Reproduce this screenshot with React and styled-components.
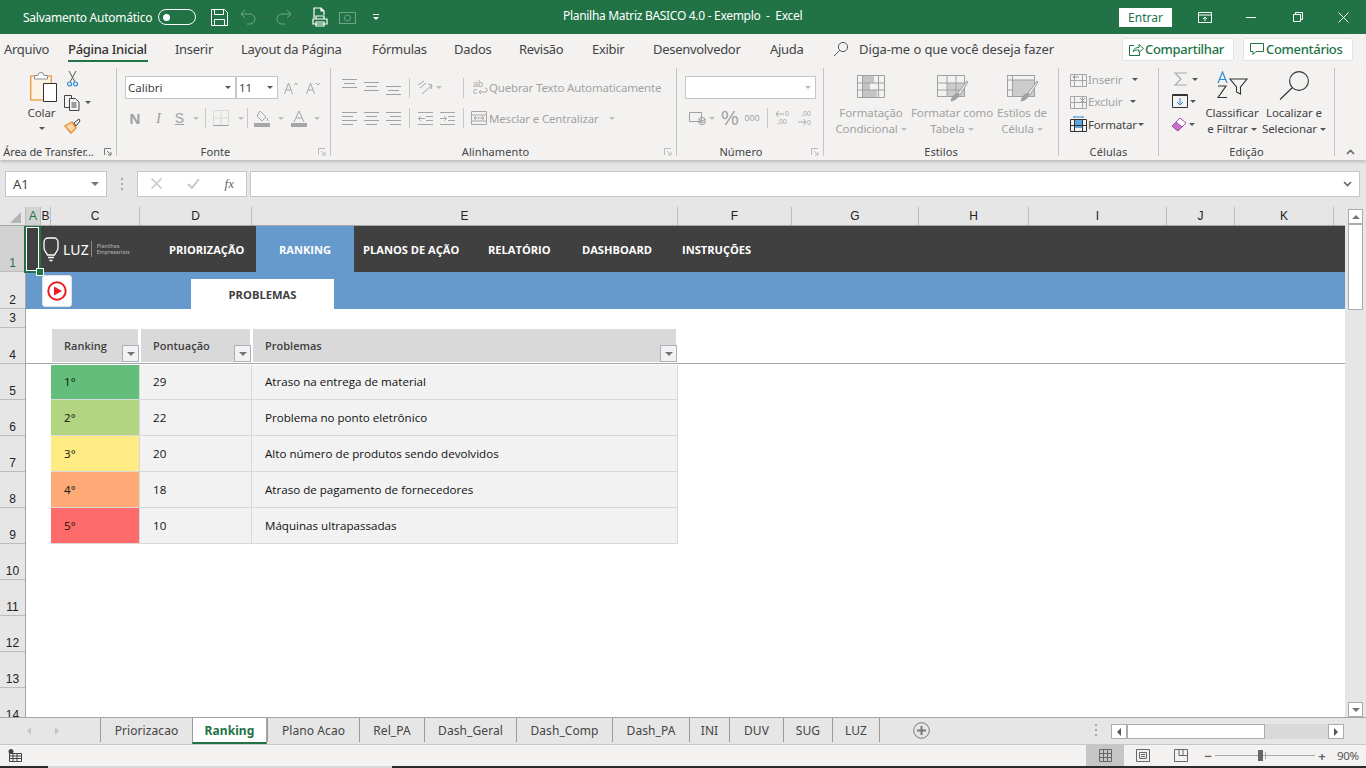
import React from "react";
import styled, {createGlobalStyle} from "styled-components";

const UI = `"Noto Sans", "Open Sans", sans-serif`;
const CELL = `"Open Sans", "Noto Sans", sans-serif`;
const GREEN = "#217346";
const DIM = "#a6a6a6";
const DARK = "#444";

const Global = createGlobalStyle`
  html, body { margin: 0; padding: 0; background: #fff; overflow: hidden; }
  * { box-sizing: border-box; }
  svg { display: block; flex: none; }
`;

const Window = styled.div`
  width: 1366px;
  height: 768px;
  display: flex;
  flex-direction: column;
  overflow: hidden;
  font-family: ${UI};
  font-size: 12px;
  color: ${DARK};
  background: #e6e6e6;
`;

/* barra de titulo */
const TitleBar = styled.div`
  height: 34px;
  flex: none;
  background: ${GREEN};
  color: #fff;
  display: flex;
  align-items: center;
  position: relative;
  padding-left: 23px;
`;
const AutoSave = styled.span`
  width: 135px;
  font-size: 12px;
  letter-spacing: -0.25px;
`;
const Toggle = styled.span`
  width: 38px;
  height: 16px;
  border: 1px solid #fff;
  border-radius: 8px;
  display: flex;
  align-items: center;
  padding-left: 4px;
  margin-right: 15px;
  &::before {
    content: "";
    width: 7px;
    height: 7px;
    border-radius: 50%;
    background: #fff;
  }
`;
const QuickSlot = styled.div`
  width: ${p => p.$w}px;
  height: 20px;
  flex: none;
  display: flex;
  align-items: center;
  justify-content: center;
  opacity: ${p => (p.$dim ? 0.35 : 1)};
`;
const DocTitle = styled.div`
  position: absolute;
  left: 563px;
  top: 7px;
  font-size: 12px;
  letter-spacing: -0.3px;
  white-space: pre;
`;
const WindowControls = styled.div`
  margin-left: auto;
  display: flex;
  align-items: center;
`;
const SignIn = styled.div`
  width: 53px;
  height: 19px;
  background: #fff;
  color: ${GREEN};
  font-size: 12px;
  line-height: 19px;
  text-align: center;
  margin-right: 11px;
`;
const ControlButton = styled.div`
  width: ${p => p.$w || 46}px;
  display: flex;
  justify-content: center;
`;

/* abas do ribbon */
const MenuBar = styled.div`
  height: 32px;
  flex: none;
  background: #f3f2f1;
  display: flex;
  align-items: center;
  padding-left: 4px;
`;
const MenuItem = styled.div`
  width: ${p => p.$w}px;
  flex: none;
  height: 32px;
  line-height: 30px;
  font-size: 13px;
  letter-spacing: -0.3px;
  color: ${p => (p.$active ? "#333" : "#444")};
  font-weight: ${p => (p.$active ? 500 : 400)};
  position: relative;
  white-space: nowrap;
  ${p => p.$active && `
    &::after {
      content: "";
      position: absolute;
      left: 0;
      width: 80px;
      top: 26px;
      height: 2px;
      background: ${GREEN};
    }
  `}
`;
const Hint = styled.div`
  display: flex;
  align-items: center;
  gap: 10px;
  font-size: 13px;
  color: #444;
  letter-spacing: -0.1px;
  margin-top: -2px;
`;
const ShareGroup = styled.div`
  margin-left: auto;
  display: flex;
  gap: 9px;
  padding-right: 13px;
  margin-top: -2px;
`;
const ShareButton = styled.div`
  width: ${p => p.$w}px;
  height: 23px;
  background: #fff;
  border: 1px solid #e4e3e2;
  border-radius: 2px;
  color: ${GREEN};
  font-size: 13px;
  font-weight: 500;
  display: flex;
  align-items: center;
  padding-left: 6px;
  gap: 1px;
  letter-spacing: -0.3px;
`;

/* ribbon */
const Ribbon = styled.div`
  height: 94px;
  flex: none;
  background: #f3f2f1;
  display: flex;
  position: relative;
  padding-top: 2px;
  box-shadow: 0 2px 3px rgba(0, 0, 0, 0.18);
  z-index: 2;
`;
const Group = styled.div`
  width: ${p => p.$w}px;
  flex: none;
  height: 88px;
  border-right: 1px solid #c4c4c4;
  display: flex;
  flex-direction: column;
  position: relative;
`;
const GroupBody = styled.div`
  height: 76px;
  flex: none;
  display: flex;
  padding-left: ${p => p.$pad || 0}px;
`;
const GroupLabel = styled.div`
  text-align: center;
  font-size: 11px;
  line-height: 16px;
  color: #444;
  white-space: nowrap;
  padding-right: ${p => p.$shift || 0}px;
  letter-spacing: ${p => p.$tight ? "-0.1px" : "0.1px"};
`;
const Launcher = styled.div`
  position: absolute;
  right: 4px;
  bottom: 0;
`;
const Stack = styled.div`
  display: flex;
  flex-direction: column;
  width: ${p => (p.$w ? `${p.$w}px` : "auto")};
  flex: none;
  gap: ${p => p.$gap || 0}px;
  padding-top: ${p => p.$top || 0}px;
`;
const ToolRow = styled.div`
  display: flex;
  align-items: center;
  height: ${p => p.$h || 22}px;
  margin-top: ${p => p.$mt || 0}px;
`;
const Tool = styled.div`
  width: ${p => p.$w}px;
  height: 100%;
  flex: none;
  display: flex;
  align-items: center;
  justify-content: center;
  font-family: "Liberation Serif", serif;
`;
const Caret = styled.span`
  display: block;
  width: 0;
  height: 0;
  border-left: 3px solid transparent;
  border-right: 3px solid transparent;
  border-top: 3px solid ${p => (p.$dim ? "#bdbdbd" : "#555")};
`;
const Divider = styled.div`
  width: 1px;
  height: 20px;
  flex: none;
  background: #c8c8c8;
  margin-left: ${p => p.$l || 0}px;
  margin-right: ${p => p.$r || 0}px;
`;
const Combo = styled.div`
  width: ${p => p.$w}px;
  height: 23px;
  flex: none;
  background: #fff;
  border: 1px solid #c6c6c6;
  display: flex;
  align-items: center;
  justify-content: space-between;
  padding: 0 4px 0 2px;
  font-size: 11.5px;
  color: #444;
`;
const LargeTool = styled.div`
  width: ${p => p.$w}px;
  flex: none;
  display: flex;
  flex-direction: column;
  align-items: center;
  padding-top: ${p => p.$top || 7}px;
  color: ${p => (p.$dim ? "#a2a2a2" : "#444")};
`;
const LargeIcon = styled.div`
  height: ${p => p.$h || 27}px;
  flex: none;
  display: flex;
  align-items: flex-start;
  justify-content: center;
  margin-bottom: 3px;
  margin-left: ${p => p.$l || 0}px;
`;
const LargeText = styled.div`
  font-size: 11.5px;
  line-height: 16px;
  flex: none;
  white-space: nowrap;
  display: flex;
  align-items: center;
  gap: 3px;
  letter-spacing: -0.1px;
`;
const SmallLabel = styled.span`
  font-size: 11.5px;
  color: ${p => (p.$dim ? "#a2a2a2" : "#444")};
  white-space: nowrap;
  letter-spacing: -0.17px;
`;
const GlyphN = styled.b`
  color: #a0a0a0;
  font-size: 15px;
  font-family: "Liberation Sans", sans-serif;
`;
const GlyphI = styled.i`
  color: #a0a0a0;
  font-size: 15px;
`;
const GlyphS = styled.u`
  color: #a0a0a0;
  font-size: 14px;
  font-family: "Liberation Sans", sans-serif;
`;
const Percent = styled.span`
  font-family: "Liberation Sans", sans-serif;
  font-size: 20px;
  color: #a0a0a0;
`;
const Thousands = styled.span`
  font-family: "Liberation Sans", sans-serif;
  font-size: 9px;
  color: #a0a0a0;
`;
const Chevron = styled.div`
  position: absolute;
  right: 11px;
  bottom: 5px;
`;

/* barra de formulas */
const FormulaBar = styled.div`
  height: 47px;
  flex: none;
  background: #e6e6e6;
  display: flex;
  align-items: center;
  padding: 0 6px 0 5px;
`;
const FieldBox = styled.div`
  height: 26px;
  width: ${p => (p.$w ? `${p.$w}px` : "auto")};
  flex: ${p => (p.$w ? "none" : 1)};
  background: #fff;
  border: 1px solid #c6c6c6;
  display: flex;
  align-items: center;
  justify-content: space-between;
  padding: 0 ${p => p.$pr || 7}px 0 ${p => p.$pl || 7}px;
  font-size: 13px;
`;
const Grip = styled.div`
  width: 30px;
  flex: none;
  display: flex;
  justify-content: center;
`;
const FxLabel = styled.span`
  font-family: "Liberation Serif", serif;
  font-style: italic;
  font-size: 13px;
  color: #666;
`;
const FieldGap = styled.div`
  width: 3px;
  flex: none;
`;

/* planilha */
const SheetArea = styled.div`
  flex: 1;
  min-height: 0;
  display: flex;
  background: #e6e6e6;
`;
const SheetMain = styled.div`
  width: 1345px;
  flex: none;
  display: flex;
  flex-direction: column;
`;
const ColumnHeads = styled.div`
  height: 19px;
  flex: none;
  display: flex;
  border-bottom: 1px solid #a6a6a6;
`;
const Corner = styled.div`
  width: 26px;
  flex: none;
  display: flex;
  align-items: flex-end;
  justify-content: flex-end;
  padding: 0 4px 2px 0;
  border-right: 1px solid #bdbdbd;
`;
const ColHead = styled.div`
  width: ${p => p.$w}px;
  flex: none;
  text-align: center;
  font-family: "Liberation Sans", sans-serif;
  font-size: 12px;
  line-height: 19px;
  color: ${p => (p.$active ? GREEN : "#222")};
  background: ${p => (p.$active ? "#d2d2d2" : "transparent")};
  border-right: 1px solid #bdbdbd;
`;
const SheetBody = styled.div`
  flex: 1;
  min-height: 0;
  display: flex;
  overflow: hidden;
`;
const RowHeads = styled.div`
  width: 26px;
  flex: none;
  border-right: 1px solid #a6a6a6;
  overflow: hidden;
`;
const RowHead = styled.div`
  height: ${p => p.$h || 36}px;
  text-align: center;
  font-family: "Liberation Sans", sans-serif;
  font-size: 12px;
  padding-top: ${p => (p.$pt !== undefined ? p.$pt : (p.$h || 36) - 16)}px;
  line-height: 15px;
  color: ${p => (p.$active ? GREEN : "#222")};
  background: ${p => (p.$active ? "#d2d2d2" : "transparent")};
  border-bottom: 1px solid #bdbdbd;
`;
const Canvas = styled.div`
  flex: 1;
  background: #fff;
  position: relative;
  font-family: ${CELL};
`;
const NavBand = styled.div`
  height: 46px;
  background: #404040;
  display: flex;
  padding-left: 17px;
`;
const Logo = styled.div`
  width: 126px;
  flex: none;
  display: flex;
  align-items: center;
  color: #fff;
`;
const LogoWord = styled.span`
  font-family: "Noto Sans", sans-serif;
  font-size: 14px;
  margin: 0 2px 0 4px;
  letter-spacing: 0.1px;
`;
const LogoSub = styled.span`
  font-family: "Noto Sans", sans-serif;
  font-size: 5.4px;
  line-height: 6px;
  color: #b9b9b9;
  border-left: 1px solid #8a8a8a;
  padding: 2px 0 2px 5px;
`;
const NavItem = styled.div`
  width: ${p => p.$w}px;
  flex: none;
  padding-left: ${p => p.$pad}px;
  line-height: 47px;
  font-size: 11.1px;
  font-weight: 700;
  color: #fff;
  white-space: nowrap;
  background: ${p => (p.$active ? "#6699cc" : "transparent")};
`;
const SubBand = styled.div`
  height: 37px;
  background: #6699cc;
  display: flex;
  align-items: flex-end;
  padding-left: 16px;
`;
const PlayButton = styled.div`
  width: 30px;
  height: 32px;
  flex: none;
  margin-bottom: 2px;
  margin-right: 119px;
  background: #fff;
  border: 1px solid #dfe3e8;
  border-radius: 3px;
  display: flex;
  align-items: center;
  justify-content: center;
`;
const SubTab = styled.div`
  width: 143px;
  height: 30px;
  background: #fff;
  text-align: center;
  line-height: 32px;
  font-size: 11.2px;
  font-weight: 700;
  color: #404040;
`;
const HeaderRow = styled.div`
  margin-top: 19px;
  margin-bottom: 1px;
  height: 36px;
  display: flex;
  padding: 1px 0 0 26px;
  gap: 3px;
  border-bottom: 1px solid #a6a6a6;
`;
const HeaderCell = styled.div`
  width: ${p => p.$w}px;
  height: 33px;
  flex: none;
  background: #d9d9d9;
  color: #404040;
  font-size: 11px;
  font-weight: 600;
  line-height: 34px;
  padding-left: 12px;
  position: relative;
`;
const FilterButton = styled.div`
  position: absolute;
  right: -1px;
  top: 16px;
  width: 17px;
  height: 17px;
  background: #f2f2f2;
  border: 1px solid #a8b0bc;
  display: flex;
  align-items: center;
  justify-content: center;
`;
const TableRow = styled.div`
  height: ${p => (p.$first ? 35 : 36)}px;
  line-height: ${p => (p.$first ? 33 : 35)}px;
  display: flex;
  margin-left: 25px;
  width: 627px;
`;
const Cell = styled.div`
  width: ${p => p.$w}px;
  flex: none;
  background: ${p => p.$bg || "#f2f2f2"};
  border-right: 1px solid #d9d9d9;
  border-bottom: 1px solid #d9d9d9;
  padding-left: 13px;
  font-size: 11.6px;
  color: #111;
  white-space: nowrap;
`;
const SelectedCell = styled.div`
  position: absolute;
  left: -2px;
  top: -1px;
  width: 17px;
  height: 48px;
  border: 2px solid ${GREEN};
  box-shadow: inset 0 0 0 1px #fff;
  &::after {
    content: "";
    position: absolute;
    right: -5px;
    bottom: -5px;
    width: 6px;
    height: 6px;
    background: ${GREEN};
    border: 1px solid #fff;
  }
`;

/* barra de rolagem */
const VScroll = styled.div`
  flex: 1;
  padding: 2px 3px 0 3px;
  display: flex;
  flex-direction: column;
`;
const ScrollButton = styled.div`
  width: ${p => p.$w || 15}px;
  height: ${p => p.$h || 15}px;
  flex: none;
  background: #fff;
  border: 1px solid #ababab;
  display: flex;
  align-items: center;
  justify-content: center;
`;
const VThumb = styled.div`
  height: 86px;
  flex: none;
  background: #fff;
  border: 1px solid #ababab;
`;
const Filler = styled.div`
  flex: 1;
`;
const ArrowUp = styled.span`
  width: 0;
  height: 0;
  border-left: 4px solid transparent;
  border-right: 4px solid transparent;
  border-bottom: 4px solid #777;
`;
const ArrowDown = styled(ArrowUp)`
  border-bottom: 0;
  border-top: 4px solid #777;
`;
const ArrowLeft = styled.span`
  width: 0;
  height: 0;
  border-top: 4px solid transparent;
  border-bottom: 4px solid transparent;
  border-right: 4px solid ${p => p.$c || "#555"};
`;
const ArrowRight = styled(ArrowLeft)`
  border-right: 0;
  border-left: 4px solid ${p => p.$c || "#555"};
`;

/* abas de planilhas */
const TabsBar = styled.div`
  height: 28px;
  flex: none;
  background: #e6e6e6;
  border-top: 1px solid #a6a6a6;
  border-bottom: 1px solid #c8c8c8;
  display: flex;
  align-items: flex-start;
  position: relative;
`;
const TabNav = styled.div`
  width: 100px;
  flex: none;
  height: 26px;
  display: flex;
  align-items: center;
  gap: 24px;
  padding-left: 27px;
`;
const SheetTab = styled.div`
  width: ${p => p.$w}px;
  flex: none;
  height: ${p => (p.$active ? 27 : 24)}px;
  margin-top: ${p => (p.$active ? -1 : 0)}px;
  line-height: ${p => (p.$active ? 26 : 25)}px;
  text-align: center;
  font-size: 12px;
  letter-spacing: 0.08px;
  white-space: nowrap;
  color: ${p => (p.$active ? GREEN : "#444")};
  font-weight: ${p => (p.$active ? 700 : 400)};
  background: ${p => (p.$active ? "#fff" : "transparent")};
  border-left: 1px solid #9a9a9a;
  border-bottom: ${p => (p.$active ? `2px solid ${GREEN}` : "none")};
  border-top: ${p => (p.$active ? "1px solid #a6a6a6" : "none")};
  border-right: ${p => (p.$active ? "1px solid #a6a6a6" : "none")};
  ${p => p.$last && "border-right: 1px solid #9a9a9a;"}
`;
const AddSheet = styled.div`
  margin: 4px 0 0 33px;
`;
const HGrip = styled.div`
  margin: 6px 0 0 165px;
  width: 2px;
`;
const HScroll = styled.div`
  position: absolute;
  left: 1111px;
  top: 6px;
  width: 233px;
  height: 15px;
  display: flex;
  background: #d9d9d9;
`;
const HThumb = styled.div`
  width: 138px;
  flex: none;
  background: #fff;
  border: 1px solid #ababab;
`;

/* barra de status */
const StatusBar = styled.div`
  height: 21px;
  flex: none;
  background: #f3f2f1;
  display: flex;
  align-items: center;
  padding-left: 8px;
`;
const ViewButtons = styled.div`
  margin-left: auto;
  display: flex;
  height: 21px;
`;
const ViewButton = styled.div`
  width: 38px;
  display: flex;
  align-items: center;
  justify-content: center;
  background: ${p => (p.$active ? "#c6c6c6" : "transparent")};
`;
const Zoom = styled.div`
  width: 166px;
  flex: none;
  display: flex;
  align-items: center;
  padding-left: 4px;
`;
const ZoomSign = styled.b`
  width: 8px;
  text-align: center;
  color: #666;
  font-size: 13px;
`;
const ZoomTrack = styled.div`
  width: 100px;
  height: 1px;
  background: #a8a8a8;
  margin: 0 3px;
  position: relative;
  &::before {
    content: "";
    position: absolute;
    left: 43px;
    top: -5px;
    width: 5px;
    height: 11px;
    background: #666;
  }
  &::after {
    content: "";
    position: absolute;
    left: 50px;
    top: -3px;
    width: 1px;
    height: 7px;
    background: #a8a8a8;
  }
`;
const ZoomLabel = styled.span`
  margin-left: 11px;
  font-size: 11.5px;
  letter-spacing: -0.3px;
  color: #555;
`;
const ScreenEdge = styled.div`
  height: 2px;
  flex: none;
  background: linear-gradient(to right, #2a2a2a 48px, #d8d8d8 48px, #d8d8d8 392px, #2a2a2a 392px);
`;

/* icones */
const SaveIcon = () => (
    <svg width="17" height="17" viewBox="0 0 17 17" fill="none" stroke="#fff">
        <path d="M.5.5h13l3 3v13H.5z"/>
        <path d="M3.5.5v5h9v-5M3.5 16.5v-6h10v6"/>
    </svg>
);
const UndoIcon = ({flip}) => (
    <svg width="16" height="16" viewBox="0 0 16 16" fill="none" stroke="#fff" style={flip ? {transform: "scaleX(-1)"} : undefined}>
        <path d="M5 1 1 5l4 4M1 5h9a4.500 4.500 0 0 1 0 10H7"/>
    </svg>
);
const PrintPreviewIcon = () => (
    <svg width="16" height="20" viewBox="0 0 16 20" fill="none" stroke="#fff" strokeWidth="1.2">
        <path d="M2 11V1h7l3 3v4M9 1v3h3"/>
        <path d="M4 9h8v3H4zM1 12h14v5H1zM4 15h8v4H4z" fill="#217346"/>
    </svg>
);
const CameraIcon = () => (
    <svg width="17" height="13" viewBox="0 0 17 13" fill="none" stroke="#fff">
        <rect x=".5" y="1.5" width="16" height="11"/><circle cx="8.5" cy="7" r="3"/>
    </svg>
);
const CustomizeIcon = () => (
    <svg width="7" height="7" viewBox="0 0 7 7" fill="#fff"><rect width="6" height="1"/><path d="M0 3h6L3 6z"/></svg>
);
const RibbonDisplayIcon = () => (
    <svg width="14" height="11" viewBox="0 0 14 11" fill="none" stroke="#fff">
        <path d="M.5.5h13v10H.5zM.5 3h13M7 9V5M5 7l2-2 2 2"/>
    </svg>
);
const MinIcon = () => <svg width="10" height="1"><rect width="10" height="1" fill="#fff"/></svg>;
const RestoreIcon = () => (
    <svg width="10" height="10" viewBox="0 0 10 10" fill="none" stroke="#fff">
        <path d="M.5 2.500h7v7h-7zM2.500 2.500v-2h7v7h-2"/>
    </svg>
);
const CloseIcon = () => (
    <svg width="11" height="11" viewBox="0 0 11 11" stroke="#fff"><path d="m.5.5 10 10M10.500.5l-10 10"/></svg>
);
const SearchSmall = () => (
    <svg width="16" height="16" viewBox="0 0 16 16" fill="none" stroke="#555">
        <circle cx="10" cy="6" r="4.6"/><path d="M6.500 9.500 1 15"/>
    </svg>
);
const ShareIcon = () => (
    <svg width="15" height="15" viewBox="0 0 15 15" fill="none" stroke="#217346">
        <path d="M5 3.500H.5v10h10V10M4 9.500c1-3 3-4 6-4V2.500l4.500 4-4.500 4V8C8 8 6 8 4 9.500z"/>
    </svg>
);
const CommentIcon = () => (
    <svg width="15" height="14" viewBox="0 0 15 14" fill="none" stroke="#217346">
        <path d="M.5 1.500h13v8H6l-3 3v-3H.5z"/>
    </svg>
);
const PasteIcon = () => (
    <svg width="28" height="32" viewBox="0 0 28 32" fill="none">
        <rect x=".75" y="5" width="20.5" height="24" fill="#fdf3e4" stroke="#eda64e" strokeWidth="1.5"/>
        <path d="M4.500 8V4.500h3.500a3 3 0 0 1 6 0h3.500V8z" fill="#fff" stroke="#8c8c8c"/>
        <path d="M13.500 12.500h13v18h-13z" fill="#fff" stroke="#333"/>
    </svg>
);
const ScissorsIcon = () => (
    <svg width="11" height="16" viewBox="0 0 11 16" fill="none">
        <path d="M2 0 8 11M9 0 3 11" stroke="#555"/>
        <circle cx="2.5" cy="13" r="2" stroke="#2a8ad4" strokeWidth="1.2"/>
        <circle cx="8.5" cy="13" r="2" stroke="#2a8ad4" strokeWidth="1.2"/>
    </svg>
);
const CopyIcon = () => (
    <svg width="16" height="16" viewBox="0 0 16 16" fill="none" stroke="#444">
        <path d="M5 12.500H.5V.5h7V4"/>
        <path d="M5.500 3.500h6l3.500 3.500v8.500H5.500zM7.500 8h5M7.500 10h5M7.500 12h5"/>
    </svg>
);
const BrushIcon = () => (
    <svg width="17" height="16" viewBox="0 0 17 16" fill="none">
        <path d="M1 8 8 4l4 6-5 5C5 13 3 10 1 8z" fill="#fbd9ae" stroke="#ed8b25" strokeWidth="1.4"/>
        <path d="m10 5 5-4 1 2-4 5z" stroke="#444"/>
    </svg>
);
const GrowFont = ({shrink}) => (
    <svg width="15" height="12" viewBox="0 0 15 12" fill="none" stroke={DIM}>
        <path d="m.5 12 4-11 4 11M2 8h5"/>
        <path d={shrink ? "m10 1 2 2 2-2" : "m10 3 2-2 2 2"}/>
    </svg>
);
const BordersIcon = () => (
    <svg width="16" height="16" viewBox="0 0 16 16" fill="none" stroke="#c0c0c0">
        <path d="M.5.5h15v15H.5zM8 .5v15M.5 8h15" strokeDasharray="1 1"/>
        <path d="M.5 15.500h15" stroke="#a0a0a0"/>
    </svg>
);
const FillIcon = () => (
    <svg width="16" height="17" viewBox="0 0 16 17" fill="none">
        <path d="m6 1 6 6-4 4-5-5zM13 8l1 3" stroke={DIM}/>
        <rect y="13" width="16" height="4" fill={DIM}/>
    </svg>
);
const FontColorIcon = () => (
    <svg width="16" height="17" viewBox="0 0 16 17" fill="none">
        <path d="m3 12 5-11 5 11M5 8h6" stroke={DIM}/>
        <rect y="13" width="16" height="4" fill={DIM}/>
    </svg>
);
const AlignIcon = ({rows, h = 17}) => (
    <svg width="16" height={h} viewBox={`0 0 16 ${h}`} stroke="#a0a0a0">
        {rows.map(([y, x1, x2]) => <line key={y} x1={x1} x2={x2} y1={y} y2={y}/>)}
    </svg>
);
const OrientIcon = () => (
    <svg width="16" height="15" viewBox="0 0 16 15" fill="none" stroke={DIM}>
        <path d="m1 5 6-4M3 8l6-5M5 14 15 5M11 4l4 1-1 4"/>
    </svg>
);
const IndentIcon = ({right}) => (
    <svg width="15" height="13" viewBox="0 0 15 13" fill="none" stroke={DIM}>
        <path d="M0 .5h15M8 4.500h7M8 8.500h7M0 12.500h15"/>
        <path d={right ? "M0 6.500h6M4 4l2.500 2.500L4 9" : "M7 6.500H1M3 4 .5 6.500 3 9"}/>
    </svg>
);
const WrapIcon = () => (
    <svg width="15" height="15" viewBox="0 0 15 15" fill="none" stroke={DIM}>
        <text x="0" y="7" fontSize="9" fill={DIM} stroke="none" fontFamily="Liberation Sans">ab</text>
        <text x="0" y="14" fontSize="9" fill={DIM} stroke="none" fontFamily="Liberation Sans">c</text>
        <path d="M6 12h6c3 0 3-4 0-4M8 10l-2 2 2 2"/>
    </svg>
);
const MergeIcon = () => (
    <svg width="16" height="14" viewBox="0 0 16 14" fill="none" stroke={DIM}>
        <path d="M.5.5h15v13H.5zM.5 4h15M.5 10h15M3 7h10M5 5 3 7l2 2M11 5l2 2-2 2"/>
    </svg>
);
const AccountingIcon = () => (
    <svg width="17" height="14" viewBox="0 0 17 14" fill="none" stroke="#a0a0a0">
        <path d="M.5 1.500h12v9H.5z"/>
        <ellipse cx="13" cy="8" rx="3" ry="1.5"/><path d="M10 8v4c0 2 6 2 6 0V8M10 10c0 2 6 2 6 0"/>
    </svg>
);
const DecimalMoreIcon = () => (
    <svg width="15" height="16" viewBox="0 0 15 16" fill="none" stroke={DIM}>
        <path d="M9 4H1M3.500 1 1 4l2.500 3"/>
        <text x="10" y="6" fontSize="7" fill={DIM} stroke="none" fontFamily="Liberation Sans">0</text>
        <text x="2" y="14" fontSize="7" fill={DIM} stroke="none" fontFamily="Liberation Sans">,00</text>
    </svg>
);
const DecimalLessIcon = () => (
    <svg width="15" height="16" viewBox="0 0 15 16" fill="none" stroke={DIM}>
        <text x="3" y="6" fontSize="7" fill={DIM} stroke="none" fontFamily="Liberation Sans">,00</text>
        <path d="M0 12h8M5.500 9 8 12l-2.500 3"/>
        <text x="9" y="15" fontSize="7" fill={DIM} stroke="none" fontFamily="Liberation Sans">0</text>
    </svg>
);
const CondFormatIcon = () => (
    <svg width="28" height="23" viewBox="0 0 28 23" fill="none" stroke="#a0a0a0">
        <rect x="5" y="1" width="12" height="7" fill="#c4c4c4" stroke="none"/>
        <rect x="5" y="8" width="8" height="7" fill="#c4c4c4" stroke="none"/>
        <rect x="5" y="15" width="15" height="7" fill="#c4c4c4" stroke="none"/>
        <path d="M.5.5h27v22H.5zM.5 8h27M.5 15h27M5.500.5v22M21.500.5v22"/>
    </svg>
);
const TableFormatIcon = ({full}) => (
    <svg width="32" height="28" viewBox="0 0 32 28" fill="none" stroke="#a0a0a0">
        <rect x=".5" y=".5" width="27" height="21" fill="#f3f2f1"/>
        <rect x={full ? 5 : 10} y={full ? 5 : 8} width={full ? 22 : 17} height={full ? 16 : 13} fill="#cccccc" stroke="none"/>
        <path d={full ? "M.5 5h27M.5 15h5M5.500.5v21" : "M.5 8h27M.5 15h27M10 .5v21M19 .5v21"}/>
        <path d="M15 23c2-4 5-5 7-4 0 3-3 6-8 7z" fill="#a0a0a0"/>
        <path d="m21 18 9-12 1 1-8 13z" fill="#ececec"/>
    </svg>
);
const CellsIcon = ({type}) => (
    <svg width="17" height="16" viewBox="0 0 17 16" fill="none" stroke={type === "fmt" ? "#333" : DIM}>
        {type === "fmt" && <rect x="4" y="4" width="9" height="8" fill="#5ba7de" stroke="none"/>}
        {type === "fmt" && <path d="M4 1h9M4 0v2M13 0v2" stroke="#2a8ad4"/>}
        <path d="M.5 3.500h16v12H.5zM.5 9.500h16M4.500 3.500v12M12.500 3.500v12"/>
        {type === "ins" && <path d="M9 6H3M5 4 3 6l2 2" stroke="#999"/>}
        {type === "del" && <path d="m10 5 5 5M15 5l-5 5" stroke="#999"/>}
    </svg>
);
const SumIcon = () => (
    <svg width="14" height="14" viewBox="0 0 14 14" fill="none" stroke={DIM} strokeWidth="1.1"><path d="M13 1H1l6 6-6 6h12"/></svg>
);
const FillDownIcon = () => (
    <svg width="16" height="14" viewBox="0 0 16 14" fill="none">
        <path d="M.5.5h15v13H.5z" stroke="#333"/><path d="M.5 1.500h15" stroke="#333"/>
        <path d="M8 4v7M5 8l3 3 3-3" stroke="#2a8ad4"/>
    </svg>
);
const EraserIcon = () => (
    <svg width="16" height="15" viewBox="0 0 16 15" fill="none">
        <path d="m1 9 8-8 6 5-8 8z" fill="#fff" stroke="#a74ca8"/>
        <path d="m1 9 4-4 6 5-4 4z" fill="#c86fca" stroke="#a74ca8"/>
    </svg>
);
const SortIcon = () => (
    <svg width="31" height="28" viewBox="0 0 31 28" fill="none">
        <path d="m1 12 4.500-11L10 12M2.500 8.500h6" stroke="#2a8ad4" strokeWidth="1.2"/>
        <path d="M1 15h8L1 26.500h9" stroke="#333" strokeWidth="1.2"/>
        <path d="M13 8h17l-6.500 8v7l-4-2v-5z" stroke="#333" strokeWidth="1.1"/>
    </svg>
);
const SearchLarge = () => (
    <svg width="30" height="29" viewBox="0 0 30 29" fill="none" stroke="#333" strokeWidth="1.1">
        <circle cx="20" cy="10" r="9.400"/><path d="M13 17 1 28.500"/>
    </svg>
);
const LauncherIcon = ({dim}) => (
    <svg width="8" height="8" viewBox="0 0 8 8" fill="none" stroke={dim ? "#bbb" : "#777"}>
        <path d="M.5 7V.5H7M3 3l4 4M4 7h3V4"/>
    </svg>
);
const ChevronUp = () => (
    <svg width="9" height="6" viewBox="0 0 9 6" fill="none" stroke="#666" strokeWidth="1.6"><path d="m1 5 3.500-3.500L8 5"/></svg>
);
const ChevronDown = () => (
    <svg width="9" height="6" viewBox="0 0 9 6" fill="none" stroke="#666" strokeWidth="1.6"><path d="m1 1 3.500 3.500L8 1"/></svg>
);
const CornerMark = () => (
    <svg width="11" height="11" viewBox="0 0 11 11"><path d="M11 0v11H0z" fill="#b4b4b4"/></svg>
);
const GripDots = () => (
    <svg width="2" height="12" viewBox="0 0 2 12" fill="#a8a8a8">
        <rect width="2" height="2"/><rect y="5" width="2" height="2"/><rect y="10" width="2" height="2"/>
    </svg>
);
const CancelIcon = () => (
    <svg width="11" height="11" viewBox="0 0 11 11" stroke="#c8c8c8" strokeWidth="1.5"><path d="m.5.5 10 10M10.500.5l-10 10"/></svg>
);
const CheckIcon = () => (
    <svg width="13" height="11" viewBox="0 0 13 11" fill="none" stroke="#c8c8c8" strokeWidth="2"><path d="m1 6 4 4 7-9"/></svg>
);
const BulbLogo = () => (
    <svg width="16" height="25" viewBox="0 0 16 25" fill="none" stroke="#fff" strokeWidth="1.3">
        <path d="M5 1h6a4 4 0 0 1 4 4v6c0 3-2.500 4.500-3.500 7h-7C3.500 15.500 1 14 1 11V5a4 4 0 0 1 4-4z"/>
        <path d="M5 20.500h6M6.500 23.500h3"/>
    </svg>
);
const PlayIcon = () => (
    <svg width="20" height="20" viewBox="0 0 20 20" fill="none">
        <circle cx="10" cy="10" r="8.700" stroke="#ed1c24" strokeWidth="2"/>
        <path d="M7 5.500 15 10l-8 4.500z" fill="#ed1c24"/>
    </svg>
);
const AddIcon = () => (
    <svg width="17" height="17" viewBox="0 0 17 17" fill="none" stroke="#777">
        <circle cx="8.5" cy="8.5" r="7.800"/><path d="M4 8.500h9M8.500 4v9" strokeWidth="2"/>
    </svg>
);
const MacroIcon = () => (
    <svg width="14" height="13" viewBox="0 0 14 13" fill="none" stroke="#444">
        <path d="M1.500 4.500h12v8h-12zM1.500 7h12M1.500 9.500h12M5 4.500v8M9 4.500v8"/>
        <circle cx="3" cy="2.5" r="2.5" fill="#444" stroke="none"/>
    </svg>
);
const GridViewIcon = () => (
    <svg width="13" height="13" viewBox="0 0 13 13" fill="none" stroke="#666">
        <path d="M.5.5h12v12H.5zM4.500.5v12M8.500.5v12M.5 4.500h12M.5 8.500h12"/>
    </svg>
);
const PageViewIcon = () => (
    <svg width="14" height="13" viewBox="0 0 14 13" fill="none" stroke="#666">
        <path d="M.5.5h13v12H.5zM3.500 3.500h7v6h-7zM5 5.500h4M5 7.500h4"/>
    </svg>
);
const BreakViewIcon = () => (
    <svg width="14" height="13" viewBox="0 0 14 13" fill="none" stroke="#666">
        <path d="M.5.5h13v12H.5zM5 .5v6h4v-6M9 6.500h4.500"/>
    </svg>
);

const Carets = {dim: <Caret $dim/>, dark: <Caret/>};

const menu = [
    ["Arquivo", 64], ["Página Inicial", 107, true], ["Inserir", 66], ["Layout da Página", 131], ["Fórmulas", 82],
    ["Dados", 65], ["Revisão", 73], ["Exibir", 61], ["Desenvolvedor", 117], ["Ajuda", 63],
];
const columns = [["A", 15, true], ["B", 10], ["C", 89], ["D", 112], ["E", 426], ["F", 114], ["G", 127], ["H", 110], ["I", 138], ["J", 68], ["K", 99]];
const nav = [
    ["PRIORIZAÇÃO", 87, 0], ["RANKING", 98, 23, true], ["PLANOS DE AÇÃO", 125, 9], ["RELATÓRIO", 103, 9], ["DASHBOARD", 100, 0], ["INSTRUÇÕES", 100, 0],
];
const ranking = [
    ["1°", "29", "Atraso na entrega de material", "#63be7b"],
    ["2°", "22", "Problema no ponto eletrônico", "#b1d580"],
    ["3°", "20", "Alto número de produtos sendo devolvidos", "#ffeb84"],
    ["4°", "18", "Atraso de pagamento de fornecedores", "#fdaa76"],
    ["5°", "10", "Máquinas ultrapassadas", "#ff6b6b"],
];
const sheets = [
    ["Priorizacao", 92], ["Ranking", 75, true], ["Plano Acao", 92], ["Rel_PA", 65], ["Dash_Geral", 92], ["Dash_Comp", 96],
    ["Dash_PA", 77], ["INI", 40], ["DUV", 54], ["SUG", 49], ["LUZ", 48, false, true],
];

const App = () => (
    <Window>
        <Global/>
        <TitleBar>
            <AutoSave>Salvamento Automático</AutoSave>
            <Toggle/>
            <QuickSlot $w={17}><SaveIcon/></QuickSlot>
            <QuickSlot $w={12}/>
            <QuickSlot $w={16} $dim><UndoIcon/></QuickSlot>
            <QuickSlot $w={12} $dim><Caret/></QuickSlot>
            <QuickSlot $w={8}/>
            <QuickSlot $w={16} $dim><UndoIcon flip/></QuickSlot>
            <QuickSlot $w={10} $dim><Caret/></QuickSlot>
            <QuickSlot $w={10}/>
            <QuickSlot $w={16}><PrintPreviewIcon/></QuickSlot>
            <QuickSlot $w={11}/>
            <QuickSlot $w={17} $dim><CameraIcon/></QuickSlot>
            <QuickSlot $w={17}/>
            <QuickSlot $w={7}><CustomizeIcon/></QuickSlot>
            <DocTitle>Planilha Matriz BASICO 4.0 - Exemplo  -  Excel</DocTitle>
            <WindowControls>
                <SignIn>Entrar</SignIn>
                <ControlButton $w={44}><RibbonDisplayIcon/></ControlButton>
                <ControlButton $w={47}><MinIcon/></ControlButton>
                <ControlButton $w={47}><RestoreIcon/></ControlButton>
                <ControlButton $w={45}><CloseIcon/></ControlButton>
            </WindowControls>
        </TitleBar>

        <MenuBar>
            {menu.map(([label, w, active]) => <MenuItem key={label} $w={w} $active={active}>{label}</MenuItem>)}
            <Hint><SearchSmall/>Diga-me o que você deseja fazer</Hint>
            <ShareGroup>
                <ShareButton $w={112}><ShareIcon/>Compartilhar</ShareButton>
                <ShareButton $w={110}><CommentIcon/>Comentários</ShareButton>
            </ShareGroup>
        </MenuBar>

        <Ribbon>
            <Group $w={117}>
                <GroupBody $pad={24}>
                    <LargeTool $w={35} $top={3}>
                        <LargeIcon $h={31} $l={5}><PasteIcon/></LargeIcon>
                        <LargeText>Colar</LargeText>
                        <Stack $top={6}><Caret/></Stack>
                    </LargeTool>
                    <Stack $top={2} $gap={5.5}>
                        <ToolRow $h={18}><Tool $w={26}><ScissorsIcon/></Tool></ToolRow>
                        <ToolRow $h={18}><Tool $w={26}><CopyIcon/></Tool><Caret/></ToolRow>
                        <ToolRow $h={18}><Tool $w={26}><BrushIcon/></Tool></ToolRow>
                    </Stack>
                </GroupBody>
                <GroupLabel $shift={19} $tight>Área de Transfer...</GroupLabel>
                <Launcher><LauncherIcon/></Launcher>
            </Group>

            <Group $w={214}>
                <GroupBody $pad={8}>
                    <Stack $top={8}>
                        <ToolRow $h={23}>
                            <Combo $w={111}>Calibri<Caret/></Combo>
                            <Combo $w={42}>11<Caret/></Combo>
                            <Tool $w={26}><GrowFont/></Tool>
                            <Tool $w={18}><GrowFont shrink/></Tool>
                        </ToolRow>
                        <ToolRow $mt={8}>
                            <Tool $w={20}><GlyphN>N</GlyphN></Tool>
                            <Tool $w={27}><GlyphI>I</GlyphI></Tool>
                            <Tool $w={15}><GlyphS>S</GlyphS></Tool>
                            <Tool $w={18}>{Carets.dim}</Tool>
                            <Divider/>
                            <Tool $w={29}><BordersIcon/></Tool>
                            <Tool $w={12}>{Carets.dim}</Tool>
                            <Divider/>
                            <Tool $w={27}><FillIcon/></Tool>
                            <Tool $w={12}>{Carets.dim}</Tool>
                            <Tool $w={24}><FontColorIcon/></Tool>
                            <Tool $w={11}>{Carets.dim}</Tool>
                        </ToolRow>
                    </Stack>
                </GroupBody>
                <GroupLabel $shift={16}>Fonte</GroupLabel>
                <Launcher><LauncherIcon dim/></Launcher>
            </Group>

            <Group $w={346}>
                <GroupBody $pad={8}>
                    <Stack $top={8}>
                        <ToolRow $h={23}>
                            <Tool $w={22}><AlignIcon rows={[[.5, 0, 15], [4.5, 2, 13], [8.5, 0, 15]]}/></Tool>
                            <Tool $w={22}><AlignIcon rows={[[3.5, 0, 15], [7.5, 2, 13], [11.5, 0, 15]]}/></Tool>
                            <Tool $w={22}><AlignIcon rows={[[7.5, 0, 15], [11.5, 2, 13], [15.5, 0, 15]]}/></Tool>
                            <Divider $l={4} $r={3}/>
                            <Tool $w={23}><OrientIcon/></Tool>
                            <Tool $w={6}>{Carets.dim}</Tool>
                            <Tool $w={21}/>
                            <Divider $r={8}/>
                            <Tool $w={17}><WrapIcon/></Tool>
                            <SmallLabel $dim>Quebrar Texto Automaticamente</SmallLabel>
                        </ToolRow>
                        <ToolRow $mt={8}>
                            <Tool $w={22}><AlignIcon h={15} rows={[[1.5, 0, 15], [5.5, 0, 11], [9.5, 0, 15], [13.5, 0, 11]]}/></Tool>
                            <Tool $w={22}><AlignIcon h={15} rows={[[1.5, 0, 15], [5.5, 2, 13], [9.5, 0, 15], [13.5, 2, 13]]}/></Tool>
                            <Tool $w={22}><AlignIcon h={15} rows={[[1.5, 0, 15], [5.5, 4, 15], [9.5, 0, 15], [13.5, 4, 15]]}/></Tool>
                            <Divider $l={4} $r={3}/>
                            <Tool $w={24}><IndentIcon/></Tool>
                            <Tool $w={20}><IndentIcon right/></Tool>
                            <Tool $w={6}/>
                            <Divider $r={5}/>
                            <Tool $w={20}><MergeIcon/></Tool>
                            <SmallLabel $dim>Mesclar e Centralizar</SmallLabel>
                            <Tool $w={26}>{Carets.dim}</Tool>
                        </ToolRow>
                    </Stack>
                </GroupBody>
                <GroupLabel $shift={16}>Alinhamento</GroupLabel>
                <Launcher><LauncherIcon dim/></Launcher>
            </Group>

            <Group $w={147}>
                <GroupBody $pad={8}>
                    <Stack $top={8}>
                        <ToolRow $h={23}><Combo $w={131}><span/><Caret $dim/></Combo></ToolRow>
                        <ToolRow $mt={8}>
                            <Tool $w={24}><AccountingIcon/></Tool>
                            <Tool $w={6}>{Carets.dim}</Tool>
                            <Tool $w={30}><Percent>%</Percent></Tool>
                            <Tool $w={14}><Thousands>000</Thousands></Tool>
                            <Tool $w={8}/>
                            <Divider/>
                            <Tool $w={29}><DecimalMoreIcon/></Tool>
                            <Tool $w={16}><DecimalLessIcon/></Tool>
                        </ToolRow>
                    </Stack>
                </GroupBody>
                <GroupLabel $shift={18}>Número</GroupLabel>
                <Launcher><LauncherIcon dim/></Launcher>
            </Group>

            <Group $w={235}>
                <GroupBody $pad={8}>
                    <LargeTool $w={78} $dim>
                        <LargeIcon><CondFormatIcon/></LargeIcon>
                        <LargeText>Formatação</LargeText>
                        <LargeText>Condicional<Caret $dim/></LargeText>
                    </LargeTool>
                    <LargeTool $w={84} $dim>
                        <LargeIcon $l={2}><TableFormatIcon/></LargeIcon>
                        <LargeText>Formatar como</LargeText>
                        <LargeText>Tabela<Caret $dim/></LargeText>
                    </LargeTool>
                    <LargeTool $w={56} $dim>
                        <LargeIcon $l={2}><TableFormatIcon full/></LargeIcon>
                        <LargeText>Estilos de</LargeText>
                        <LargeText>Célula<Caret $dim/></LargeText>
                    </LargeTool>
                </GroupBody>
                <GroupLabel>Estilos</GroupLabel>
            </Group>

            <Group $w={100}>
                <GroupBody $pad={10}>
                    <Stack>
                        <ToolRow><Tool $w={19}><CellsIcon type="ins"/></Tool><SmallLabel $dim>Inserir</SmallLabel><Tool $w={26}>{Carets.dark}</Tool></ToolRow>
                        <ToolRow><Tool $w={19}><CellsIcon type="del"/></Tool><SmallLabel $dim>Excluir</SmallLabel><Tool $w={22}>{Carets.dark}</Tool></ToolRow>
                        <ToolRow $mt={1}><Tool $w={19}><CellsIcon type="fmt"/></Tool><SmallLabel>Formatar</SmallLabel><Tool $w={8}>{Carets.dark}</Tool></ToolRow>
                    </Stack>
                </GroupBody>
                <GroupLabel>Células</GroupLabel>
            </Group>

            <Group $w={176}>
                <GroupBody $pad={10}>
                    <Stack $w={34}>
                        <ToolRow><Tool $w={23}><SumIcon/></Tool><Caret/></ToolRow>
                        <ToolRow><Tool $w={21}><FillDownIcon/></Tool><Caret/></ToolRow>
                        <ToolRow $mt={1}><Tool $w={20}><EraserIcon/></Tool><Caret/></ToolRow>
                    </Stack>
                    <LargeTool $w={58} $top={3}>
                        <LargeIcon $h={31}><SortIcon/></LargeIcon>
                        <LargeText>Classificar</LargeText>
                        <LargeText>e Filtrar<Caret/></LargeText>
                    </LargeTool>
                    <LargeTool $w={66} $top={3}>
                        <LargeIcon $h={31}><SearchLarge/></LargeIcon>
                        <LargeText>Localizar e</LargeText>
                        <LargeText>Selecionar<Caret/></LargeText>
                    </LargeTool>
                </GroupBody>
                <GroupLabel>Edição</GroupLabel>
            </Group>
            <Chevron><ChevronUp/></Chevron>
        </Ribbon>

        <FormulaBar>
            <FieldBox $w={102}>A1<ArrowDown/></FieldBox>
            <Grip><GripDots/></Grip>
            <FieldBox $w={110} $pl={13} $pr={12}>
                <CancelIcon/><CheckIcon/>
                <FxLabel>fx</FxLabel>
            </FieldBox>
            <FieldGap/>
            <FieldBox><span/><ChevronDown/></FieldBox>
        </FormulaBar>

        <SheetArea>
            <SheetMain>
                <ColumnHeads>
                    <Corner><CornerMark/></Corner>
                    {columns.map(([label, w, active]) => <ColHead key={label} $w={w} $active={active}>{label}</ColHead>)}
                </ColumnHeads>
                <SheetBody>
                    <RowHeads>
                        <RowHead $h={46} $active>1</RowHead>
                        <RowHead $h={37}>2</RowHead>
                        <RowHead $h={19} $pt={2}>3</RowHead>
                        <RowHead $h={36}>4</RowHead>
                        {[5, 6, 7, 8, 9, 10, 11, 12, 13, 14].map(n => <RowHead key={n}>{n}</RowHead>)}
                    </RowHeads>
                    <Canvas>
                        <NavBand>
                            <Logo>
                                <BulbLogo/>
                                <LogoWord>LUZ</LogoWord>
                                <LogoSub>Planilhas<br/>Empresariais</LogoSub>
                            </Logo>
                            {nav.map(([label, w, pad, active]) => <NavItem key={label} $w={w} $pad={pad} $active={active}>{label}</NavItem>)}
                        </NavBand>
                        <SubBand>
                            <PlayButton><PlayIcon/></PlayButton>
                            <SubTab>PROBLEMAS</SubTab>
                        </SubBand>
                        <HeaderRow>
                            <HeaderCell $w={86}>Ranking<FilterButton><ArrowDown/></FilterButton></HeaderCell>
                            <HeaderCell $w={109}>Pontuação<FilterButton><ArrowDown/></FilterButton></HeaderCell>
                            <HeaderCell $w={423}>Problemas<FilterButton><ArrowDown/></FilterButton></HeaderCell>
                        </HeaderRow>
                        {ranking.map(([pos, score, text, color], index) => (
                            <TableRow key={pos} $first={index === 0}>
                                <Cell $w={89} $bg={color}>{pos}</Cell>
                                <Cell $w={112}>{score}</Cell>
                                <Cell $w={426}>{text}</Cell>
                            </TableRow>
                        ))}
                        <SelectedCell/>
                    </Canvas>
                </SheetBody>
            </SheetMain>
            <VScroll>
                <ScrollButton><ArrowUp/></ScrollButton>
                <VThumb/>
                <Filler/>
                <ScrollButton><ArrowDown/></ScrollButton>
            </VScroll>
        </SheetArea>

        <TabsBar>
            <TabNav><ArrowLeft $c="#c4c4c4"/><ArrowRight $c="#c4c4c4"/></TabNav>
            {sheets.map(([label, w, active, last]) => <SheetTab key={label} $w={w} $active={active} $last={last}>{label}</SheetTab>)}
            <AddSheet><AddIcon/></AddSheet>
            <HGrip><GripDots/></HGrip>
            <HScroll>
                <ScrollButton $h={15} $w={16}><ArrowLeft/></ScrollButton>
                <HThumb/>
                <Filler/>
                <ScrollButton $h={15} $w={16}><ArrowRight/></ScrollButton>
            </HScroll>
        </TabsBar>

        <StatusBar>
            <MacroIcon/>
            <ViewButtons>
                <ViewButton $active><GridViewIcon/></ViewButton>
                <ViewButton><PageViewIcon/></ViewButton>
                <ViewButton><BreakViewIcon/></ViewButton>
            </ViewButtons>
            <Zoom>
                <ZoomSign>−</ZoomSign>
                <ZoomTrack/>
                <ZoomSign>+</ZoomSign>
                <ZoomLabel>90%</ZoomLabel>
            </Zoom>
        </StatusBar>
        <ScreenEdge/>
    </Window>
);

export default App;
